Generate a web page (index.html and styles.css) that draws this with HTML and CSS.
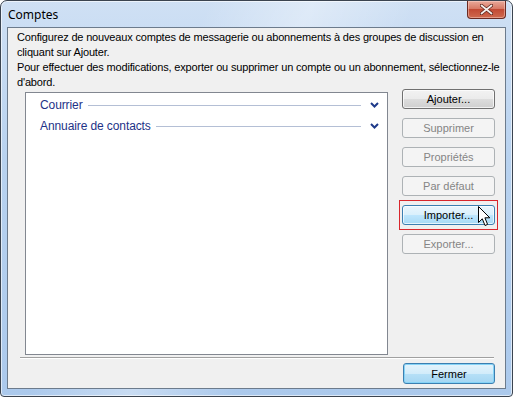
FILE: index.html
```html
<!DOCTYPE html>
<html lang="fr">
<head>
<meta charset="utf-8">
<title>Comptes</title>
<link rel="stylesheet" href="styles.css">
</head>
<body>
<div class="window">
  <div class="titlebar">
    <span class="title">Comptes</span>
    <button class="close" aria-label="Fermer">
      <svg width="13" height="11" viewBox="0 0 13 11"><path d="M1.5 1.5 L11.5 9.5 M11.5 1.5 L1.5 9.5" stroke="#5a2219" stroke-width="3.4" stroke-linecap="round"/><path d="M1.5 1.5 L11.5 9.5 M11.5 1.5 L1.5 9.5" stroke="#f4f0ee" stroke-width="1.8" stroke-linecap="round"/></svg>
    </button>
  </div>
  <div class="client">
    <p class="intro">Configurez de nouveaux comptes de messagerie ou abonnements à des groupes de discussion en<br>cliquant sur Ajouter.<br>Pour effectuer des modifications, exporter ou supprimer un compte ou un abonnement, sélectionnez-le<br>d'abord.</p>
    <div class="main">
      <div class="list">
        <div class="group">
          <span class="gname">Courrier</span><span class="gline"></span>
          <svg class="chev" width="9" height="6" viewBox="0 0 9 6"><path d="M1 1 L4.5 4.5 L8 1" fill="none" stroke="#1e3a8a" stroke-width="2"/></svg>
        </div>
        <div class="group">
          <span class="gname">Annuaire de contacts</span><span class="gline"></span>
          <svg class="chev" width="9" height="6" viewBox="0 0 9 6"><path d="M1 1 L4.5 4.5 L8 1" fill="none" stroke="#1e3a8a" stroke-width="2"/></svg>
        </div>
      </div>
      <div class="buttons">
        <button class="btn">Ajouter...</button>
        <button class="btn disabled">Supprimer</button>
        <button class="btn disabled">Propriétés</button>
        <button class="btn disabled">Par défaut</button>
        <button class="btn hover marked">Importer...
          <svg class="cursor" width="13" height="21" viewBox="0 0 13 21"><path d="M0.5 0.5 L0.5 16.5 L4.3 12.8 L7 19.5 L9.6 18.4 L6.9 11.8 L11.8 11.8 Z" fill="#ffffff" stroke="#000000" stroke-width="1" stroke-linejoin="miter"/></svg>
        </button>
        <button class="btn disabled">Exporter...</button>
      </div>
    </div>
    <div class="separator"></div>
    <div class="footer">
      <button class="btn default">Fermer</button>
    </div>
  </div>
</div>
</body>
</html>
```
FILE: styles.css
```css
* { box-sizing: border-box; }
html, body { margin: 0; padding: 0; background: #ffffff; }
body { width: 513px; height: 397px; overflow: hidden; }

.window {
  width: 513px;
  height: 397px;
  border: 1px solid #3b4450;
  border-radius: 7px 7px 4px 4px;
  background:
    linear-gradient(115deg, rgba(255,255,255,0) 30%, rgba(255,255,255,0.35) 45%, rgba(255,255,255,0) 60%),
    linear-gradient(180deg, #cfe0f4 0%, #b8d2ef 40%, #abc9ec 100%);
  display: flex;
  flex-direction: column;
  padding: 0 6px 7px 6px;
  font-family: "Liberation Sans", Arial, sans-serif;
  box-shadow: inset 0 0 0 1px rgba(255,255,255,0.6);
}

.titlebar {
  height: 26px;
  display: flex;
  justify-content: space-between;
  align-items: flex-start;
  flex: none;
}
.title {
  padding: 6px 0 0 1px;
  font-family: "Noto Sans", "Liberation Sans", sans-serif;
  font-size: 12px;
  line-height: 16px;
  color: #000000;
}
.close {
  width: 39px;
  height: 18px;
  margin: 0;
  padding: 0;
  border: 1px solid #6a2a22;
  border-top: none;
  border-radius: 0 0 4px 4px;
  background: linear-gradient(180deg, #e9a99a 0%, #d77a66 45%, #c24a34 50%, #cf6a4f 100%);
  box-shadow: inset 0 0 0 1px rgba(255,220,210,0.45);
  display: flex;
  align-items: center;
  justify-content: center;
}

.client {
  flex: 1;
  border: 1px solid #6c7b8c;
  background: #f0f0f0;
  display: flex;
  flex-direction: column;
}

.intro {
  margin: 0;
  padding: 2px 0 0 9px;
  font-size: 11px;
  line-height: 15px;
  letter-spacing: -0.17px;
  color: #000000;
  white-space: nowrap;
}

.main {
  display: flex;
  align-items: flex-start;
  padding-left: 17px;
  margin-top: -1px;
}

.list {
  width: 363px;
  height: 263px;
  margin-top: 3px;
  border: 1px solid #828790;
  background: #ffffff;
  padding: 1px 8px 0 14px;
}
.group {
  height: 21px;
  display: flex;
  align-items: center;
}
.gname {
  font-family: "Liberation Sans", Arial, sans-serif;
  font-size: 12px;
  letter-spacing: -0.1px;
  color: #1e3287;
  white-space: nowrap;
}
.gline {
  flex: 1;
  height: 1px;
  background: #b4bfd5;
  margin: 1px 0 0 5px;
}
.chev { margin-left: 9px; flex: none; }

.buttons {
  width: 93px;
  margin-left: 14px;
  display: flex;
  flex-direction: column;
  gap: 9px;
}

.btn {
  position: relative;
  height: 20px;
  width: 100%;
  margin: 0;
  padding: 0;
  font-family: "Liberation Sans", Arial, sans-serif;
  font-size: 11px;
  color: #000000;
  border: 1px solid #707070;
  border-radius: 3px;
  background: linear-gradient(180deg, #f2f2f2 0%, #ebebeb 50%, #dddddd 51%, #cfcfcf 100%);
  box-shadow: inset 0 0 0 1px rgba(255,255,255,0.7);
}
.btn.disabled {
  color: #858585;
  border-color: #adb2b5;
  background: #f4f4f4;
  box-shadow: none;
}
.btn.hover {
  border-color: #3c7fb1;
  background: linear-gradient(180deg, #eaf6fd 0%, #d9f0fc 50%, #bee6fd 51%, #a7d9f5 100%);
}
.btn.marked::after {
  content: "";
  position: absolute;
  left: -4px;
  right: -4px;
  top: -6px;
  bottom: -6px;
  border: 1px solid #d9262c;
}
.cursor {
  position: absolute;
  left: 75px;
  top: 0px;
}

.separator {
  height: 2px;
  margin: 2px 11px 0 12px;
  border-top: 1px solid #a0a0a0;
  border-bottom: 1px solid #ffffff;
}

.footer {
  display: flex;
  justify-content: flex-end;
  padding: 4px 10px 0 0;
}
.btn.default {
  width: 92px;
  height: 21px;
  border-color: #3c7fb1;
  background: linear-gradient(180deg, #e5f4fc 0%, #d2ecfa 50%, #b6e0f7 51%, #a5d6f2 100%);
  box-shadow: inset 0 0 0 1px #86d3f6;
}
```
